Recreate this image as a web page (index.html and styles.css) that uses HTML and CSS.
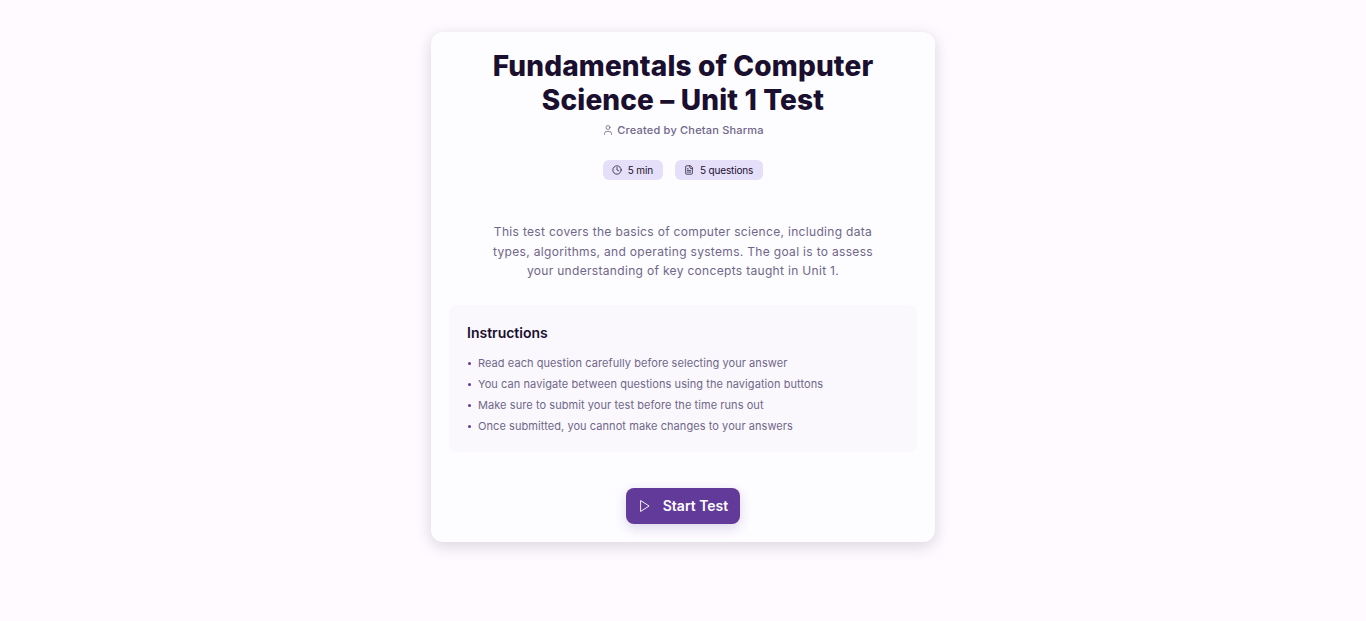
FILE: index.html
```html
<!DOCTYPE html>
<html lang="en">
<head>
<meta charset="utf-8">
<title>Fundamentals of Computer Science – Unit 1 Test</title>
<link rel="stylesheet" href="styles.css">
</head>
<body>
<main class="card">
  <header class="head">
    <h1 class="title">Fundamentals of Computer<br>Science – Unit 1 Test</h1>
    <p class="author">
      <svg class="icon-author" viewBox="0 0 24 24" fill="none" stroke="currentColor" stroke-width="2" stroke-linecap="round" stroke-linejoin="round"><path d="M19 21v-2a4 4 0 0 0-4-4H9a4 4 0 0 0-4 4v2"/><circle cx="12" cy="7" r="4"/></svg>
      <span>Created by Chetan Sharma</span>
    </p>
    <div class="chips">
      <span class="chip">
        <svg class="icon-chip" viewBox="0 0 24 24" fill="none" stroke="currentColor" stroke-width="2" stroke-linecap="round" stroke-linejoin="round"><circle cx="12" cy="12" r="10"/><path d="M12 6v6l4 2"/></svg>
        <span>5 min</span>
      </span>
      <span class="chip">
        <svg class="icon-chip" viewBox="0 0 24 24" fill="none" stroke="currentColor" stroke-width="2" stroke-linecap="round" stroke-linejoin="round"><path d="M15 2H6a2 2 0 0 0-2 2v16a2 2 0 0 0 2 2h12a2 2 0 0 0 2-2V7z"/><path d="M14 2v4a2 2 0 0 0 2 2h4"/><path d="M16 13H8"/><path d="M16 17H8"/><path d="M10 9H8"/></svg>
        <span>5 questions</span>
      </span>
    </div>
  </header>
  <p class="desc">This test covers the basics of computer science, including data<br>types, algorithms, and operating systems. The goal is to assess<br>your understanding of key concepts taught in Unit 1.</p>
  <section class="panel">
    <h2 class="panel-title">Instructions</h2>
    <ul class="list">
      <li>Read each question carefully before selecting your answer</li>
      <li>You can navigate between questions using the navigation buttons</li>
      <li>Make sure to submit your test before the time runs out</li>
      <li>Once submitted, you cannot make changes to your answers</li>
    </ul>
  </section>
  <div class="actions">
    <button class="start" type="button">
      <svg class="icon-play" viewBox="0 0 24 24" fill="none" stroke="currentColor" stroke-width="2" stroke-linecap="round" stroke-linejoin="round"><path d="M5 3l14 9-14 9z"/></svg>
      <span>Start Test</span>
    </button>
  </div>
</main>
</body>
</html>
```
FILE: styles.css
```css
* { box-sizing: border-box; }
html, body { margin: 0; padding: 0; }
body {
  min-height: 621px;
  background: #fefaff;
  font-family: Inter, "Noto Sans", sans-serif;
  display: flex;
  justify-content: center;
  align-items: flex-start;
  padding-top: 32px;
}
.card {
  width: 504px;
  height: 510px;
  padding: 16px 18px 18px;
  background: #fdfcff;
  border-radius: 12px;
  box-shadow: 0 4px 16px rgba(30, 15, 50, 0.16);
  display: flex;
  flex-direction: column;
}
.head { text-align: center; }
.title {
  margin: 1px 0 0;
  font-size: 28px;
  line-height: 34px;
  font-weight: 800;
  color: #1a0f2e;
  letter-spacing: 0.15px;
}
.author {
  margin: 4px 0 0;
  height: 18px;
  display: flex;
  justify-content: center;
  align-items: center;
  gap: 3px;
  font-size: 11px;
  font-weight: 500;
  letter-spacing: 0.2px;
  color: #6f6789;
}
.icon-author { width: 12px; height: 12px; stroke-width: 1.6; }
.chips {
  margin-top: 21px;
  display: flex;
  justify-content: center;
  gap: 12px;
}
.chip {
  height: 20px;
  padding: 0 10px 0 9px;
  display: flex;
  align-items: center;
  gap: 6px;
  background: #e6dffa;
  border-radius: 6px;
  font-size: 10px;
  font-weight: 400;
  letter-spacing: -0.15px;
  color: #1a0f2e;
}
.icon-chip { width: 10px; height: 10px; stroke-width: 1.8; }
.desc {
  margin: 42px auto 0;
  width: 400px;
  text-align: center;
  font-size: 12px;
  line-height: 19.5px;
  letter-spacing: 0.32px;
  color: #6f6789;
}
.panel {
  margin-top: 24px;
  height: 147px;
  padding: 18px;
  background: #faf8fd;
  border-radius: 8px;
}
.panel-title {
  margin: 0;
  font-size: 14px;
  line-height: 20px;
  font-weight: 600;
  color: #1a0f2e;
}
.list {
  list-style: none;
  margin: 10px 0 0;
  padding: 0;
}
.list li {
  position: relative;
  height: 21px;
  padding-left: 11px;
  font-size: 11px;
  line-height: 21px;
  letter-spacing: 0.07px;
  color: #6f6789;
}
.list li::before {
  content: "";
  position: absolute;
  left: 1px;
  top: 9px;
  width: 3px;
  height: 3px;
  border-radius: 50%;
  background: #5e3a9a;
}
.actions {
  margin-top: 36px;
  display: flex;
  justify-content: center;
}
.start {
  width: 114px;
  height: 36px;
  padding: 0;
  border: 0;
  border-radius: 8px;
  background: #613a9a;
  color: #fff;
  font-family: inherit;
  font-size: 14px;
  font-weight: 600;
  display: flex;
  align-items: center;
  justify-content: center;
  gap: 11px;
  box-shadow: 0 4px 12px rgba(97, 58, 154, 0.2);
}
.icon-play { width: 14px; height: 14px; stroke-width: 1.6; }
```
